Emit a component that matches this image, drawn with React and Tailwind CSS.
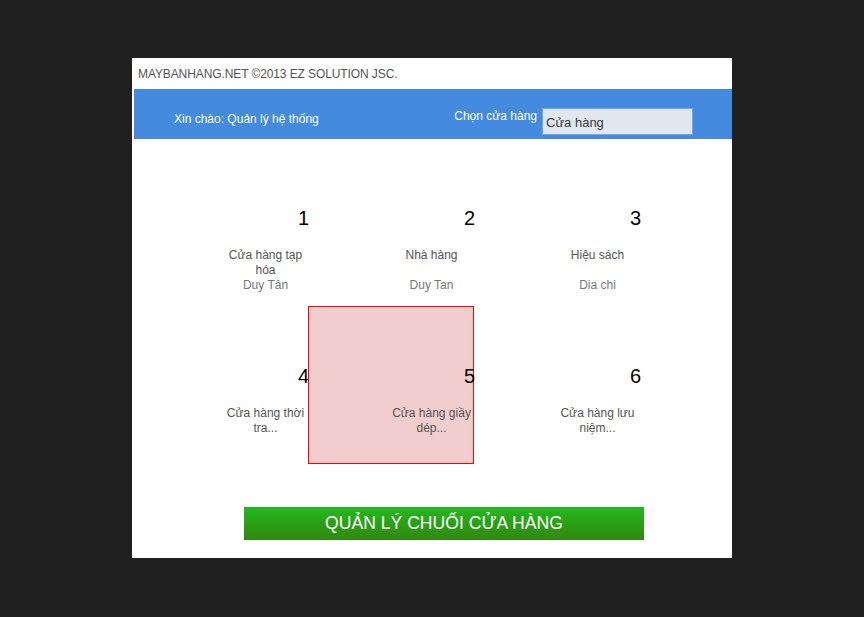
export default function App() {
  const stores = [
    { n: 1, name: "Cửa hàng tạp hóa", addr: "Duy Tân" },
    { n: 2, name: "Nhà hàng", addr: "Duy Tan" },
    { n: 3, name: "Hiệu sách", addr: "Dia chi" },
    { n: 4, name: "Cửa hàng thời tra...", addr: "" },
    { n: 5, name: "Cửa hàng giầy dép...", addr: "", active: true },
    { n: 6, name: "Cửa hàng lưu niệm...", addr: "" },
  ];
  return (
    <div
      className="w-full min-h-[617px] bg-[#202020] pt-[58px] pl-[132px]"
      style={{ fontFamily: '"Liberation Sans", Arial, sans-serif' }}
    >
      <div className="w-[600px] h-[500px] bg-white flex flex-col">
        <div className="h-[31px] flex items-center pl-[6px] text-[12px] tracking-[-0.1px] text-[#555] leading-none">
          MAYBANHANG.NET ©2013 EZ SOLUTION JSC.
        </div>
        <div className="ml-[2px] h-[50px] bg-[#448ade] flex items-start pt-[19px] pl-[40px] pr-[39px] text-[12px] leading-[15px] text-white">
          <div className="mt-[4px]">Xin chào: Quản lý hệ thống</div>
          <div className="ml-auto mt-[1px]">Chọn cửa hàng</div>
          <div className="ml-[5px] w-[151px] h-[27px] bg-[#e1e6ef] border border-[#6aaaf0] flex items-center pl-[3px] pt-[1px] text-[13px] text-[#3a3a3a]">
            Cửa hàng
          </div>
        </div>
        <div className="mt-[9px] ml-[10px] grid grid-cols-[166px_166px_166px] grid-rows-[158px_158px]">
          {stores.map((s) => (
            <div key={s.n} className="relative flex flex-col items-end">
              {s.active && (
                <div className="absolute inset-0 border border-[#ff0000] bg-[#f2cdcd]" />
              )}
              <div className="relative pt-[59px] flex flex-col items-end">
                <div className="text-[20px] leading-[20px] text-black -mr-[1px] mt-[1px]">{s.n}</div>
                <div className="mt-[20px] w-[85px] text-center text-[12px] leading-[15px]">
                  <div className="h-[30px] overflow-hidden text-[#555]">{s.name}</div>
                  {s.addr && <div className="text-[#777]">{s.addr}</div>}
                </div>
              </div>
            </div>
          ))}
        </div>
        <div className="mt-[43px] ml-[112px] w-[400px] h-[33px] bg-gradient-to-b from-[#22b820] to-[#2e880e] flex items-center justify-center text-white text-[17.6px] leading-none">
          QUẢN LÝ CHUỐI CỬA HÀNG
        </div>
      </div>
    </div>
  );
}
